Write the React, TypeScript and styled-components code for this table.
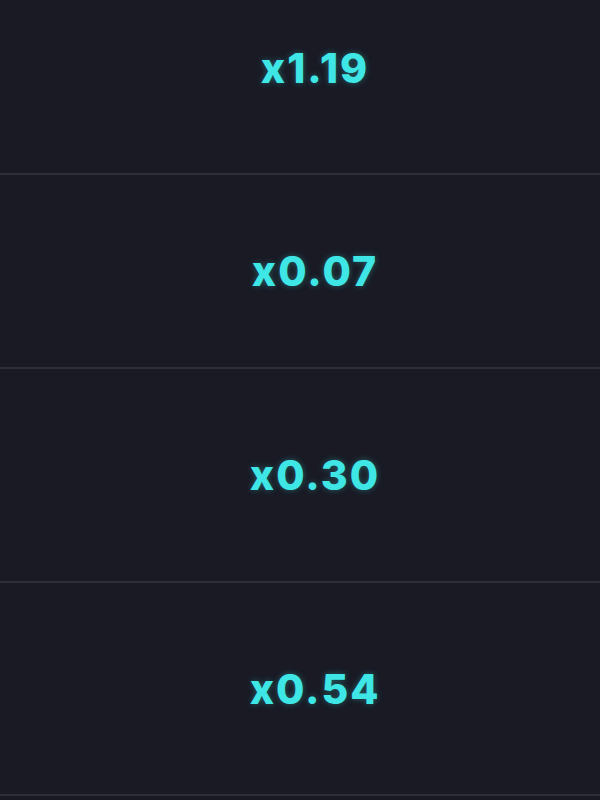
import React from 'react';
import styled, { createGlobalStyle } from 'styled-components';

const GlobalStyle = createGlobalStyle`
  html, body {
    margin: 0;
    padding: 0;
    background: #191a24;
    overflow: hidden;
  }
`;

const List = styled.div`
  width: 600px;
  height: 800px;
  overflow: hidden;
  background: #191a24;
  display: flex;
  flex-direction: column;
`;

const Track = styled.div`
  display: flex;
  flex-direction: column;
  margin-top: -37px;
`;

const Row = styled.div<{ $h: number }>`
  height: ${p => p.$h}px;
  flex-shrink: 0;
  display: flex;
  align-items: center;
  justify-content: center;
  padding-left: 30px;
  border-bottom: 2px solid #2d2e39;
  box-sizing: border-box;
`;

const Multiplier = styled.span`
  font-family: Inter, 'Noto Sans', sans-serif;
  font-weight: 800;
  font-size: 41px;
  letter-spacing: 2px;
  color: #3fe6e6;
  text-shadow: 0 0 6px rgba(63, 230, 230, 0.35);
`;

const rows = [
  { value: 'x1.19', h: 212 },
  { value: 'x0.07', h: 194 },
  { value: 'x0.30', h: 214 },
  { value: 'x0.54', h: 213 },
];

export default function App() {
  return (
    <>
      <GlobalStyle />
      <List>
        <Track>
          {rows.map(r => (
            <Row key={r.value} $h={r.h}>
              <Multiplier>{r.value}</Multiplier>
            </Row>
          ))}
        </Track>
      </List>
    </>
  );
}
